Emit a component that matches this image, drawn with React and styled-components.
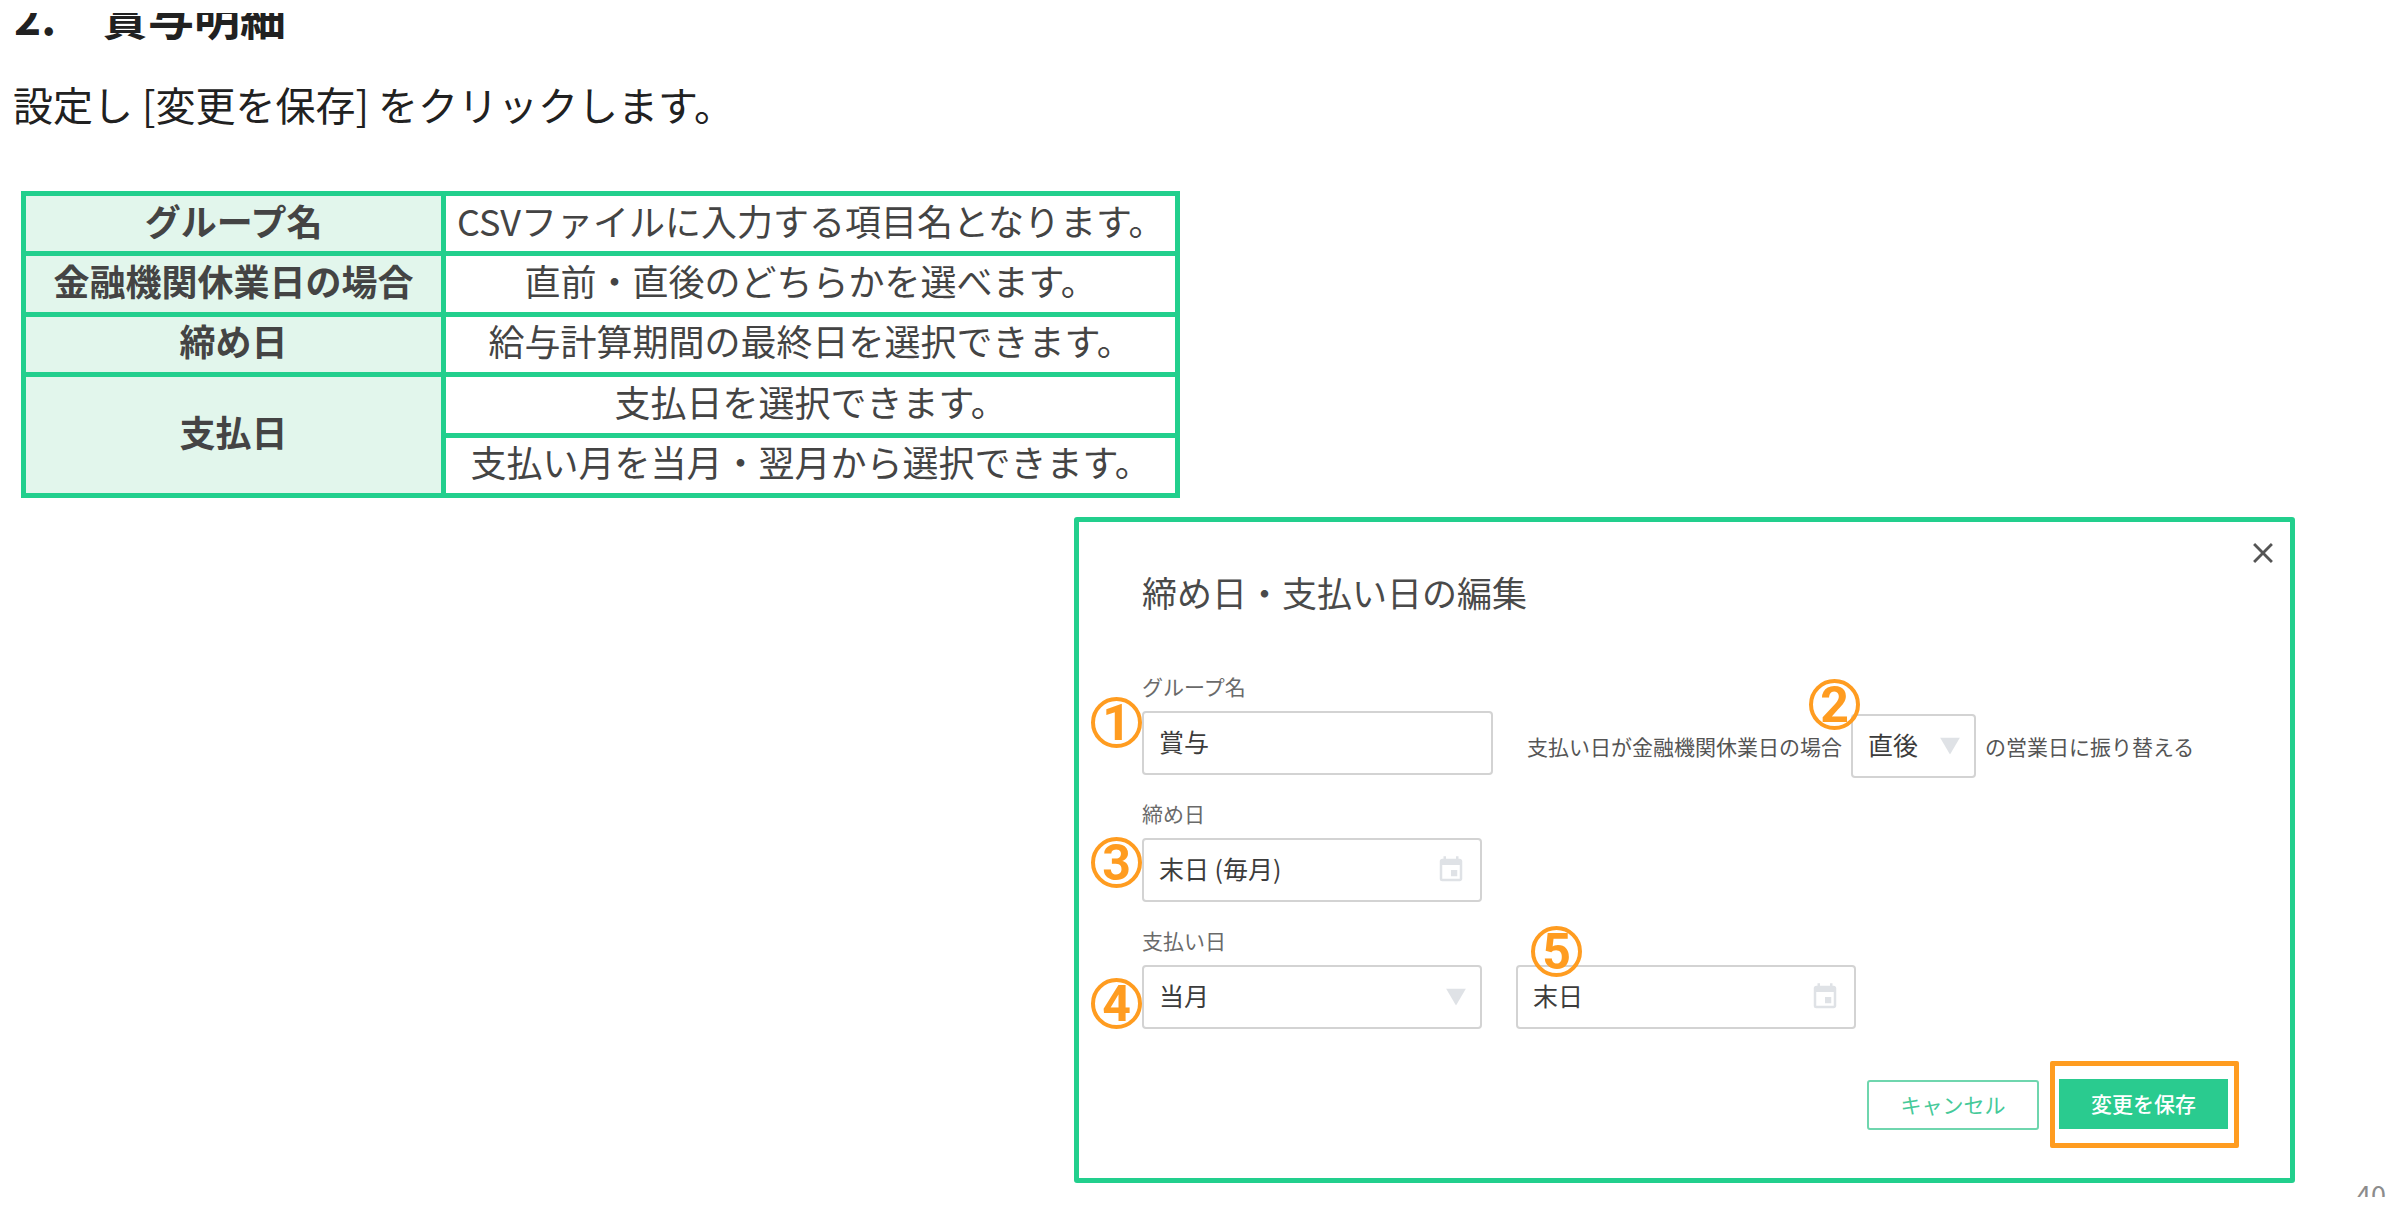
import styled, { createGlobalStyle } from "styled-components";
import { MdClose, MdEvent } from "react-icons/md";

const GlobalStyle = createGlobalStyle`
  :root {
    --color-green: #22cf8d;
    --color-green-light: #e2f6ec;
    --color-orange: #ff9c20;
    --color-text: #212121;
    --color-cell: #444444;
    --color-label: #6a6a6a;
    --color-line: #d3d3d3;
    --color-icon: #dfe2e6;
  }

  * {
    box-sizing: border-box;
  }

  body {
    margin: 0;
    background: #ffffff;
    color: var(--color-text);
    font-family: "Noto Sans CJK JP", sans-serif;
  }

  input,
  select,
  button {
    font-family: inherit;
  }
`;

const Page = styled.main`
  padding: 13px 0;
`;

/* the heading is cut off at the top edge of the slide */
const HeadingClip = styled.div`
  display: flex;
  align-items: flex-end;
  height: 34px;
  padding-left: 14px;
  overflow: hidden;
`;

const Heading = styled.h1`
  flex: none;
  margin: 0;
  font-size: 46px;
  font-weight: 700;
  line-height: 64px;
  white-space: pre;
`;

const Lead = styled.p`
  margin: 27px 0 0 13px;
  font-size: 40px;
  line-height: 60px;
`;

const Table = styled.table`
  width: 48.3%;
  height: 307px;
  margin: 57px 0 0 21px;
  border-collapse: collapse;
  color: var(--color-cell);
  font-size: 36px;
  line-height: 40px;
  text-align: center;
  white-space: nowrap;

  th,
  td {
    height: 60px;
    padding: 3px 0 11px;
    border: 5px solid var(--color-green);
  }

  th {
    width: 36.4%;
    background: var(--color-green-light);
    font-weight: 700;
  }
`;

const Dialog = styled.section`
  position: relative;
  margin: 19px 105px 0 44.75%;
  padding: 44px 51px 30px 63px;
  border: 5px solid var(--color-green);
  border-radius: 3px;
`;

const DialogTitle = styled.h2`
  margin: 0;
  color: #4a4a4a;
  font-size: 35px;
  font-weight: 400;
  line-height: 52px;
`;

const CloseButton = styled.button`
  position: absolute;
  top: 14px;
  right: 10px;
  display: flex;
  padding: 0;
  border: 0;
  background: none;
  color: #555555;
  font-size: 34px;
`;

const Form = styled.form`
  margin-top: 46px;
`;

const Row = styled.div`
  display: flex;
  align-items: flex-end;
  gap: 34px;
  margin-bottom: 16px;
`;

const Field = styled.div`
  width: ${({ $width }) => $width}px;
`;

const Label = styled.label`
  display: block;
  height: 47px;
  color: var(--color-label);
  font-size: 21px;
  line-height: 45px;
`;

const Control = styled.div`
  position: relative;
  width: ${({ $width }) => ($width ? `${$width}px` : "100%")};

  input,
  select {
    display: block;
    width: 100%;
    height: 64px;
    padding: 0 14px 4px 15px;
    border: 2px solid var(--color-line);
    border-radius: 4px;
    outline: none;
    appearance: none;
    background: #ffffff;
    color: #3c3c3c;
    font-size: 25px;
  }

  > svg {
    position: absolute;
    top: 50%;
    right: 16px;
    transform: translateY(-50%);
    color: var(--color-icon);
    font-size: 30px;
    pointer-events: none;
  }
`;

const Badge = styled.span`
  position: absolute;
  top: ${({ $top }) => $top}px;
  left: ${({ $left }) => $left}px;
  display: flex;
  align-items: center;
  justify-content: center;
  width: 51px;
  height: 51px;
  border: 4px solid var(--color-orange);
  border-radius: 50%;
  color: var(--color-orange);
  font-family: Roboto, sans-serif;
  font-size: 50px;
  font-weight: 700;
  line-height: 1;
`;

const Holiday = styled.div`
  display: flex;
  align-items: center;
  gap: 9px;
  margin-bottom: -3px;
  color: #555555;
  font-size: 21px;
  white-space: nowrap;
`;

const Actions = styled.div`
  display: flex;
  align-items: center;
  justify-content: flex-end;
  gap: 11px;
  margin-top: 32px;
`;

const ActionButton = styled.button`
  width: ${({ $primary }) => ($primary ? 169 : 172)}px;
  height: 50px;
  padding: 0 0 2px;
  border: 2px solid ${({ $primary }) => ($primary ? "#2acb8f" : "#6fd6ae")};
  border-radius: ${({ $primary }) => ($primary ? 0 : 3)}px;
  background: ${({ $primary }) => ($primary ? "#2acb8f" : "#ffffff")};
  color: ${({ $primary }) => ($primary ? "#ffffff" : "#45c999")};
  font-size: 21px;
  font-weight: ${({ $primary }) => ($primary ? 500 : 400)};
`;

const Highlight = styled.div`
  padding: 13px 6px 14px 4px;
  border: 5px solid var(--color-orange);
  border-radius: 2px;
`;

/* the page number runs past the bottom edge of the slide */
const PageNumber = styled.footer`
  height: 14px;
  padding-right: 14px;
  overflow: hidden;
  color: #8c8c8c;
  font-size: 27px;
  line-height: 22px;
  text-align: right;
`;

function Arrow() {
  return (
    <svg width="20" height="17" viewBox="0 0 20 17" aria-hidden="true">
      <path d="M0 0h20L10 17z" fill="currentColor" />
    </svg>
  );
}

export default function App() {
  return (
    <>
      <GlobalStyle />
      <Page>
        <HeadingClip>
          <Heading>2.　賞与明細</Heading>
        </HeadingClip>
        <Lead>設定し [変更を保存] をクリックします。</Lead>

        <Table>
          <tbody>
            <tr>
              <th scope="row">グループ名</th>
              <td>CSVファイルに入力する項目名となります。</td>
            </tr>
            <tr>
              <th scope="row">金融機関休業日の場合</th>
              <td>直前・直後のどちらかを選べます。</td>
            </tr>
            <tr>
              <th scope="row">締め日</th>
              <td>給与計算期間の最終日を選択できます。</td>
            </tr>
            <tr>
              <th scope="rowgroup" rowSpan={2}>
                支払日
              </th>
              <td>支払日を選択できます。</td>
            </tr>
            <tr>
              <td>支払い月を当月・翌月から選択できます。</td>
            </tr>
          </tbody>
        </Table>

        <Dialog role="dialog" aria-labelledby="dialog-title">
          <DialogTitle id="dialog-title">締め日・支払い日の編集</DialogTitle>
          <CloseButton type="button" aria-label="閉じる">
            <MdClose />
          </CloseButton>

          <Form onSubmit={(e) => e.preventDefault()}>
            <Row>
              <Field $width={351}>
                <Label htmlFor="group">グループ名</Label>
                <Control>
                  <input id="group" type="text" defaultValue="賞与" />
                  <Badge $top={-14} $left={-51}>1</Badge>
                </Control>
              </Field>
              <Holiday>
                <label htmlFor="holiday">支払い日が金融機関休業日の場合</label>
                <Control $width={125}>
                  <select id="holiday" defaultValue="直後">
                    <option>直前</option>
                    <option>直後</option>
                  </select>
                  <Arrow />
                  <Badge $top={-35} $left={-42}>2</Badge>
                </Control>
                <span>の営業日に振り替える</span>
              </Holiday>
            </Row>

            <Row>
              <Field $width={340}>
                <Label htmlFor="closing">締め日</Label>
                <Control>
                  <input id="closing" type="text" defaultValue="末日 (毎月)" />
                  <MdEvent />
                  <Badge $top={-1} $left={-51}>3</Badge>
                </Control>
              </Field>
            </Row>

            <Row>
              <Field $width={340}>
                <Label htmlFor="month">支払い日</Label>
                <Control>
                  <select id="month" defaultValue="当月">
                    <option>当月</option>
                    <option>翌月</option>
                  </select>
                  <Arrow />
                  <Badge $top={13} $left={-51}>4</Badge>
                </Control>
              </Field>
              <Control $width={340}>
                <input type="text" aria-label="支払い日の日付" defaultValue="末日" />
                <MdEvent />
                <Badge $top={-39} $left={15}>5</Badge>
              </Control>
            </Row>

            <Actions>
              <ActionButton type="button">キャンセル</ActionButton>
              <Highlight>
                <ActionButton type="submit" $primary>
                  変更を保存
                </ActionButton>
              </Highlight>
            </Actions>
          </Form>
        </Dialog>

        <PageNumber>40</PageNumber>
      </Page>
    </>
  );
}
